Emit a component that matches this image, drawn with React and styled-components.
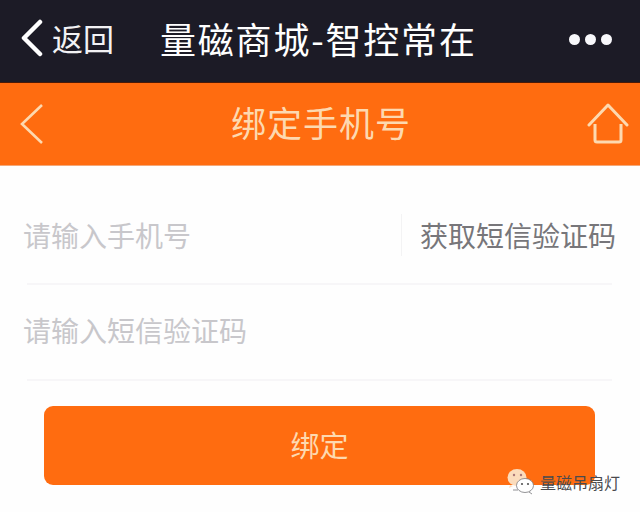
import React from 'react';
import styled, { createGlobalStyle } from 'styled-components';

const GlobalStyle = createGlobalStyle`
  html, body {
    margin: 0;
    padding: 0;
    background: #fff;
    font-family: "Noto Sans CJK SC", "Liberation Sans", sans-serif;
  }
`;

const Page = styled.div`
  position: relative;
  width: 640px;
  height: 512px;
  overflow: hidden;
  background: #fefefe;
`;

const WeChatBar = styled.header`
  box-sizing: border-box;
  height: 83px;
  display: flex;
  align-items: center;
  padding: 0 16px 6px 20px;
  background: #1c1b26;
  border-bottom: 1px solid #4a1a08;
  color: #fff;
`;

const BackLink = styled.div`
  display: flex;
  align-items: center;
  width: 140px;
  gap: 6px;
  font-size: 31px;
  line-height: 40px;
  color: #f2f2f4;
`;

const BarTitle = styled.div`
  font-size: 36px;
  line-height: 44px;
  letter-spacing: 1.8px;
  white-space: nowrap;
  flex: 1;
`;

const Dots = styled.div`
  display: flex;
  gap: 5px;
  margin-right: 12px;
  margin-top: 2px;
`;

const Dot = styled.span`
  width: 11px;
  height: 11px;
  border-radius: 50%;
  background: #f8f8fb;
`;

const NavBar = styled.nav`
  box-sizing: border-box;
  height: 83px;
  display: flex;
  align-items: center;
  justify-content: space-between;
  padding: 0 11px 0 19px;
  background: #ff6c10;
  border-bottom: 1px solid #f4a878;
`;

const NavTitle = styled.div`
  font-size: 35px;
  line-height: 44px;
  letter-spacing: 1px;
  margin: 0 0 4px 10px;
  color: #fdd9b0;
  font-weight: 400;
`;

const Form = styled.form`
  padding: 35px 28px 0 27px;
`;

const Row = styled.div`
  box-sizing: border-box;
  height: ${(p) => p.$height}px;
  display: flex;
  align-items: center;
  justify-content: space-between;
  padding-bottom: 3px;
  border-bottom: 2px solid #f7f6f8;
`;

const Placeholder = styled.span`
  font-size: 28px;
  line-height: 36px;
  color: #c8c7cb;
  margin-left: -4px;
  margin-top: ${(p) => p.$top || 0}px;
`;

const CodeButton = styled.span`
  box-sizing: border-box;
  height: 42px;
  display: flex;
  align-items: center;
  padding-left: 18px;
  margin-right: -4px;
  margin-top: -12px;
  border-left: 1px solid #f3f3f4;
  font-size: 28px;
  color: #77767a;
`;

const Submit = styled.button`
  display: block;
  width: 551px;
  height: 79px;
  margin: 25px 0 0 44px;
  padding: 0 0 3px;
  border: none;
  border-radius: 9px;
  background: #ff6c10;
  color: #fdd9b0;
  font-family: inherit;
  font-size: 29px;
`;

const Watermark = styled.div`
  position: absolute;
  left: 507px;
  top: 467px;
  display: flex;
  align-items: center;
  gap: 3px;
  font-size: 16px;
  line-height: 22px;
  color: #4a4a4e;
`;

const BackIcon = () => (
  <svg width="26" height="38" viewBox="0 0 26 38" fill="none">
    <path d="M20 3 L4 19 L20 35" stroke="#fff" strokeWidth="4.5" strokeLinecap="round" strokeLinejoin="round" />
  </svg>
);

const NavBackIcon = () => (
  <svg width="26" height="42" viewBox="0 0 26 42" fill="none">
    <path d="M23 2 L3 21 L23 40" stroke="#fdd9b0" strokeWidth="2.6" />
  </svg>
);

const HomeIcon = () => (
  <svg width="42" height="42" viewBox="0 0 42 42" fill="none" stroke="#fdd9b0" strokeWidth="3">
    <path d="M2 22 L21 2 L40 22" strokeLinecap="round" strokeLinejoin="round" />
    <path d="M8 21 V37 Q8 39 10 39 H32 Q34 39 34 37 V21" />
  </svg>
);

const WeChatIcon = () => (
  <svg width="30" height="30" viewBox="0 0 30 30">
    <ellipse cx="10" cy="10.5" rx="9.5" ry="8.5" fill="#fbdcbc" />
    <path d="M3 18 L2 21 L6 19 Z" fill="#fbdcbc" />
    <ellipse cx="18" cy="18.5" rx="8.5" ry="7" fill="#fff" stroke="#77777b" strokeWidth="0.8" />
    <path d="M6 23 H11 M22 25 L25 27" stroke="#77777b" strokeWidth="0.8" />
    <circle cx="7" cy="8" r="1.2" fill="#a77" />
    <circle cx="14" cy="8" r="1.2" fill="#a77" />
    <circle cx="15" cy="17" r="1.1" fill="#555" />
    <circle cx="21" cy="17" r="1.1" fill="#555" />
  </svg>
);

export default function App() {
  return (
    <Page>
      <GlobalStyle />
      <WeChatBar>
        <BackLink>
          <BackIcon />
          返回
        </BackLink>
        <BarTitle>量磁商城-智控常在</BarTitle>
        <Dots>
          <Dot />
          <Dot />
          <Dot />
        </Dots>
      </WeChatBar>
      <NavBar>
        <NavBackIcon />
        <NavTitle>绑定手机号</NavTitle>
        <HomeIcon />
      </NavBar>
      <Form>
        <Row $height={84}>
          <Placeholder $top={-12}>请输入手机号</Placeholder>
          <CodeButton>获取短信验证码</CodeButton>
        </Row>
        <Row $height={96}>
          <Placeholder $top={-2}>请输入短信验证码</Placeholder>
        </Row>
      </Form>
      <Submit type="button">绑定</Submit>
      <Watermark>
        <WeChatIcon />
        量磁吊扇灯
      </Watermark>
    </Page>
  );
}
